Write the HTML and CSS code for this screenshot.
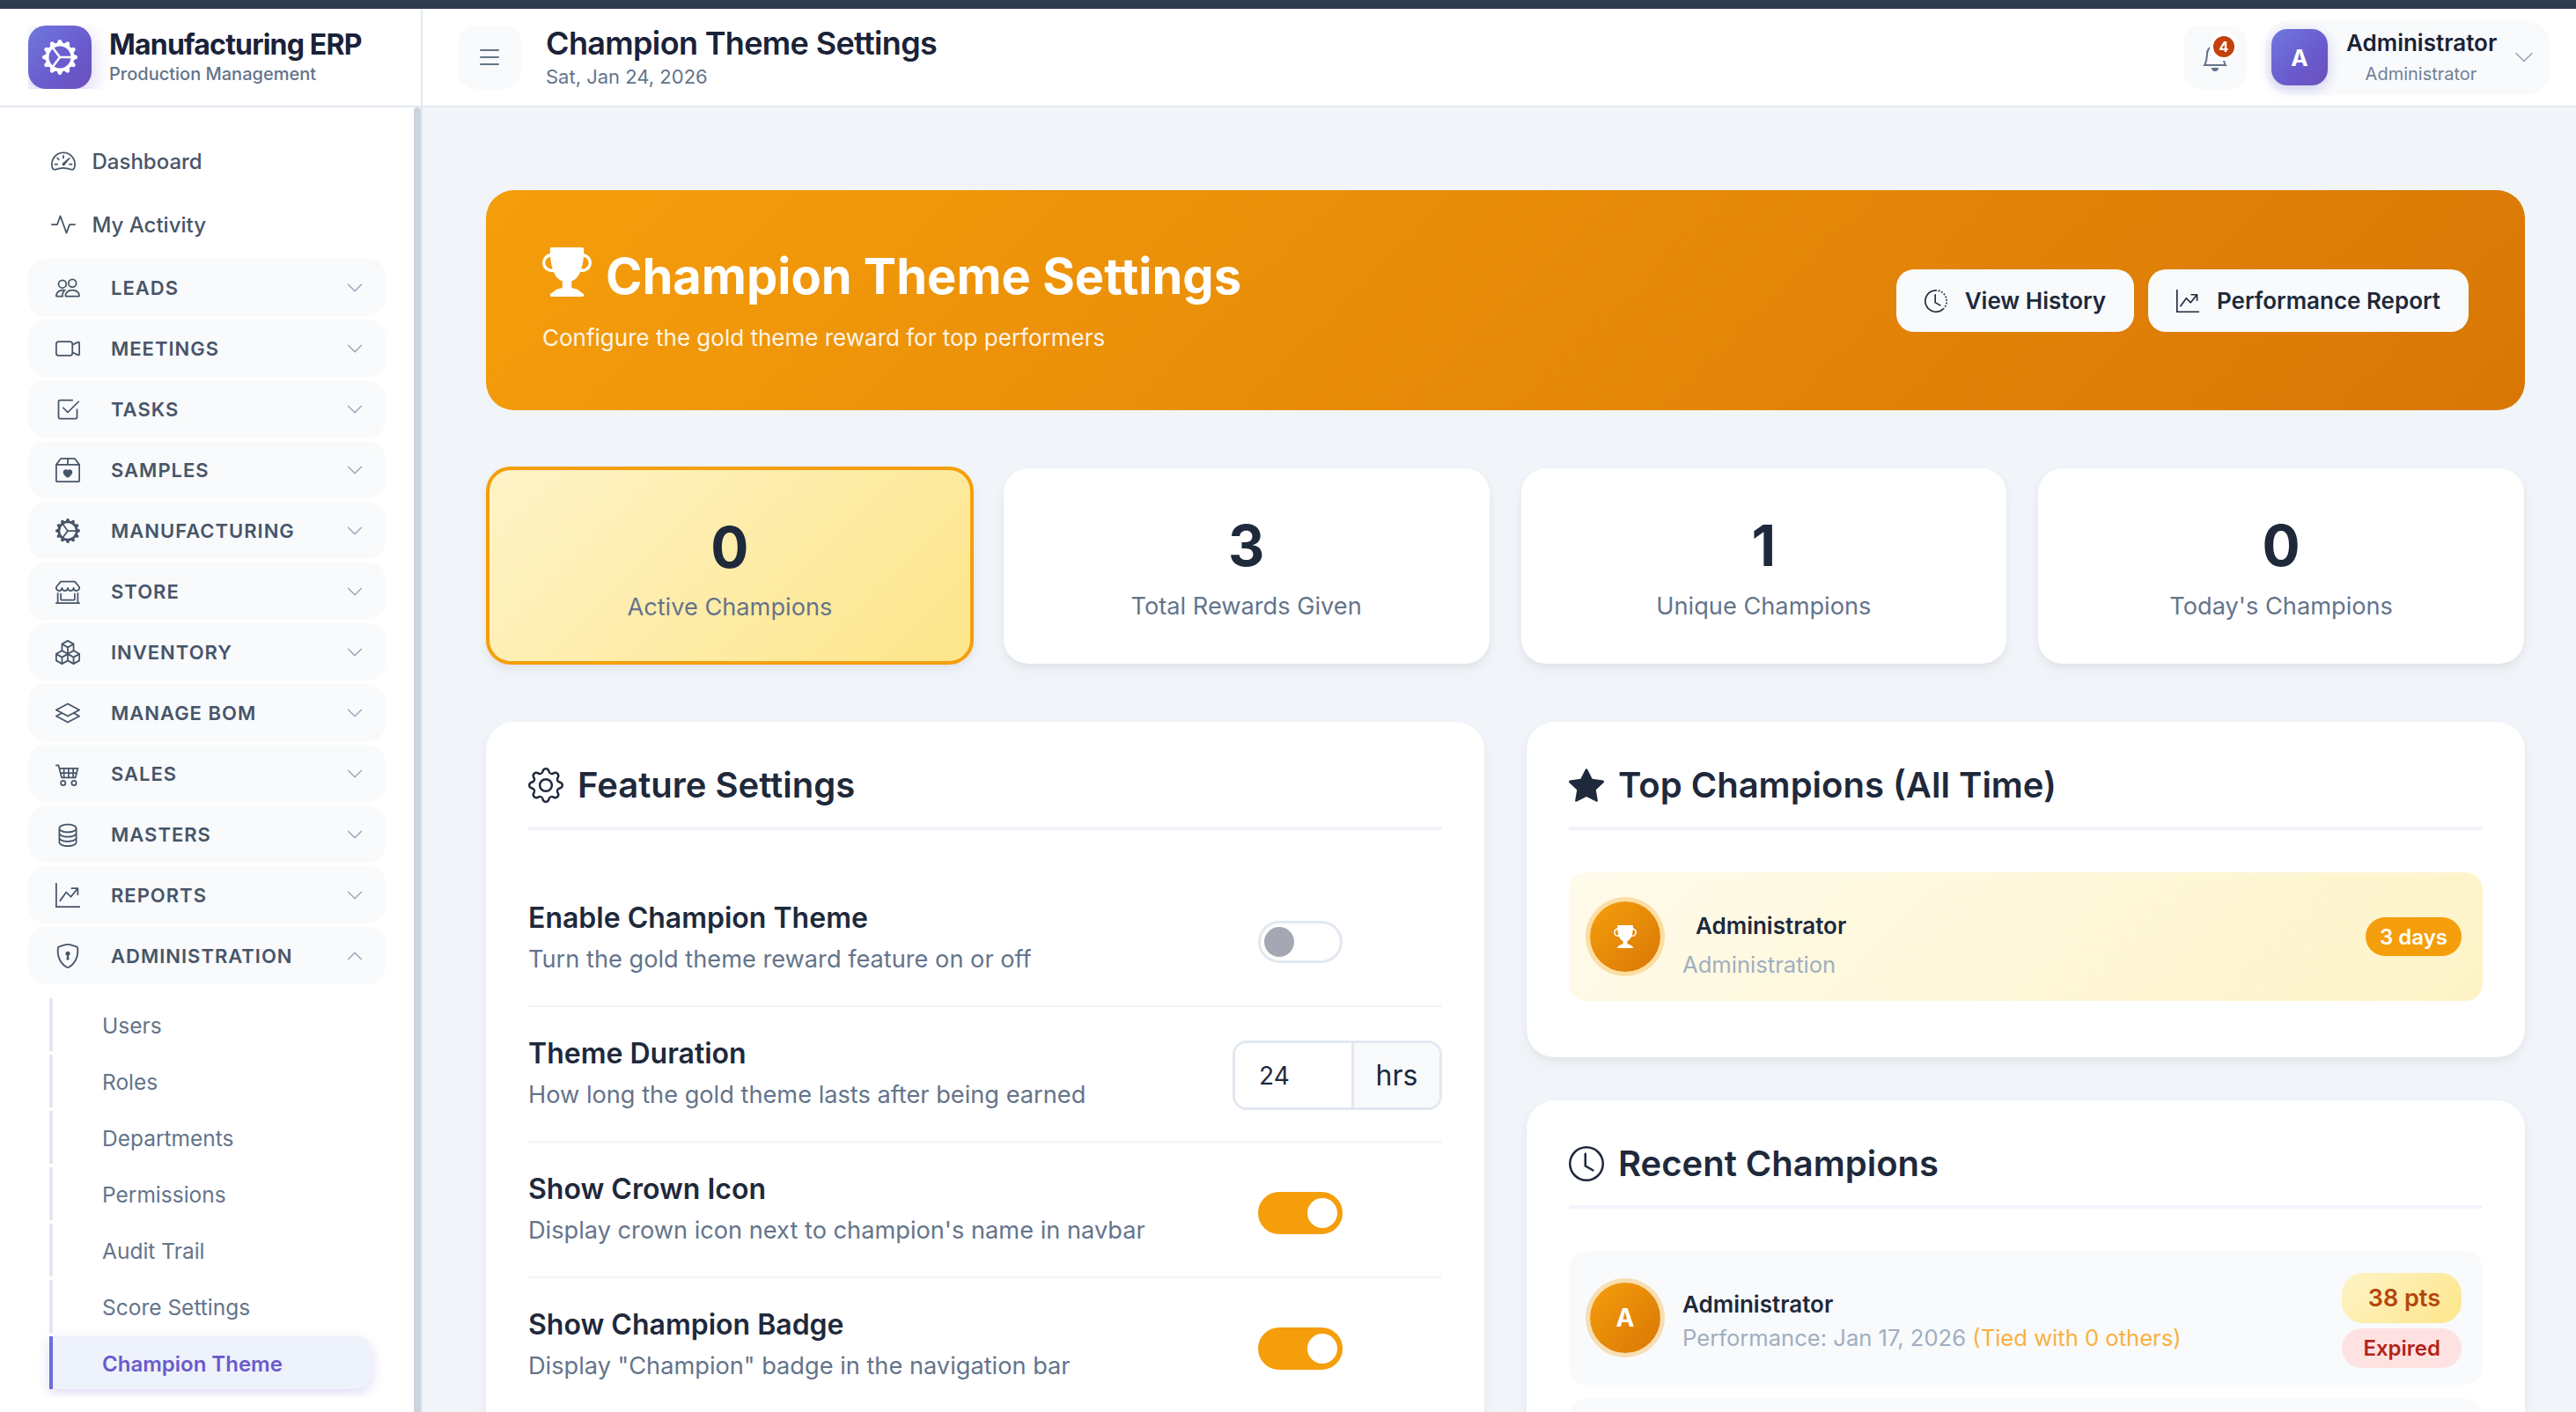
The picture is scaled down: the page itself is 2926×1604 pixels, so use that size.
FILE: index.html
```html
<!DOCTYPE html>
<html lang="en">
<head>
<meta charset="utf-8">
<title>Champion Theme Settings</title>
<link rel="stylesheet" href="styles.css">
</head>
<body>
<svg class="sprite" xmlns="http://www.w3.org/2000/svg">
<symbol id="i-speed" viewBox="0 0 16 16"><path d="M8 4a.5.5 0 0 1 .5.5V6a.5.5 0 0 1-1 0V4.5A.5.5 0 0 1 8 4zM3.732 5.732a.5.5 0 0 1 .707 0l.915.914a.5.5 0 1 1-.708.708l-.914-.915a.5.5 0 0 1 0-.707zM2 10a.5.5 0 0 1 .5-.5h1.586a.5.5 0 0 1 0 1H2.5A.5.5 0 0 1 2 10zm9.5 0a.5.5 0 0 1 .5-.5h1.5a.5.5 0 0 1 0 1H12a.5.5 0 0 1-.5-.5zm.754-4.246a.389.389 0 0 0-.527-.02L7.547 9.31a.91.91 0 1 0 1.302 1.258l3.434-4.297a.389.389 0 0 0-.029-.518z"/><path fill-rule="evenodd" d="M0 10a8 8 0 1 1 15.547 2.661c-.442 1.253-1.845 1.602-2.932 1.25C11.309 13.488 9.475 13 8 13c-1.474 0-3.31.488-4.615.911-1.087.352-2.49.003-2.932-1.25A7.988 7.988 0 0 1 0 10zm8-7a7 7 0 0 0-6.603 9.329c.203.575.923.876 1.68.63C4.397 12.533 6.358 12 8 12s3.604.532 4.923.96c.757.245 1.477-.056 1.68-.631A7 7 0 0 0 8 3z"/></symbol>
<symbol id="i-activity" viewBox="0 0 16 16"><path fill-rule="evenodd" d="M6 2a.5.5 0 0 1 .47.33L10 12.036l1.53-4.208A.5.5 0 0 1 12 7.5h3.5a.5.5 0 0 1 0 1h-3.15l-1.88 5.17a.5.5 0 0 1-.94 0L6 3.964 4.47 8.171A.5.5 0 0 1 4 8.5H.5a.5.5 0 0 1 0-1h3.15l1.88-5.17A.5.5 0 0 1 6 2Z"/></symbol>
<symbol id="i-people" viewBox="0 0 16 16"><path d="M15 14s1 0 1-1-1-4-5-4-5 3-5 4 1 1 1 1h8Zm-7.978-1A.261.261 0 0 1 7 12.996c.001-.264.167-1.03.76-1.72C8.312 10.629 9.282 10 11 10c1.717 0 2.687.63 3.24 1.276.593.69.758 1.457.76 1.72l-.008.002a.274.274 0 0 1-.014.002H7.022ZM11 7a2 2 0 1 0 0-4 2 2 0 0 0 0 4Zm3-2a3 3 0 1 1-6 0 3 3 0 0 1 6 0ZM6.936 9.28a5.88 5.88 0 0 0-1.23-.247A7.35 7.35 0 0 0 5 9c-4 0-5 3-5 4 0 .667.333 1 1 1h4.216A2.238 2.238 0 0 1 5 13c0-1.01.377-2.042 1.09-2.904.243-.294.526-.569.846-.816ZM4.92 10A5.493 5.493 0 0 0 4 13H1c0-.26.164-1.03.76-1.724.545-.636 1.492-1.256 3.16-1.275ZM1.5 5.5a3 3 0 1 1 6 0 3 3 0 0 1-6 0Zm3-2a2 2 0 1 0 0 4 2 2 0 0 0 0-4Z"/></symbol>
<symbol id="i-video" viewBox="0 0 16 16"><path fill-rule="evenodd" d="M0 5a2 2 0 0 1 2-2h7.5a2 2 0 0 1 1.983 1.738l3.11-1.382A1 1 0 0 1 16 4.269v7.462a1 1 0 0 1-1.406.913l-3.111-1.382A2 2 0 0 1 9.5 13H2a2 2 0 0 1-2-2V5zm11.5 5.175 3.5 1.556V4.269l-3.5 1.556v4.35zM2 4a1 1 0 0 0-1 1v6a1 1 0 0 0 1 1h7.5a1 1 0 0 0 1-1V5a1 1 0 0 0-1-1H2z"/></symbol>
<symbol id="i-check" viewBox="0 0 16 16"><path d="M3 14.5A1.5 1.5 0 0 1 1.5 13V3A1.5 1.5 0 0 1 3 1.5h8a.5.5 0 0 1 0 1H3a.5.5 0 0 0-.5.5v10a.5.5 0 0 0 .5.5h10a.5.5 0 0 0 .5-.5V8a.5.5 0 0 1 1 0v5a1.5 1.5 0 0 1-1.5 1.5H3z"/><path d="m8.354 10.354 7-7a.5.5 0 0 0-.708-.708L8 9.293 5.354 6.646a.5.5 0 1 0-.708.708l3 3a.5.5 0 0 0 .708 0z"/></symbol>
<symbol id="i-box" viewBox="0 0 16 16"><path d="M8 7.982C9.664 6.309 13.825 9.236 8 13 2.175 9.236 6.336 6.31 8 7.982Z"/><path d="M3.75 0a1 1 0 0 0-.8.4L.1 4.2a.5.5 0 0 0-.1.3V15a1 1 0 0 0 1 1h14a1 1 0 0 0 1-1V4.5a.5.5 0 0 0-.1-.3L13.05.4a1 1 0 0 0-.8-.4h-8.5Zm0 1H7.5v3h-6l2.25-3ZM8.5 4V1h3.75l2.25 3h-6ZM15 5v10H1V5h14Z"/></symbol>
<symbol id="i-gearwide" viewBox="0 0 16 16"><path d="M7.068.727c.243-.97 1.62-.97 1.864 0l.071.286a.96.96 0 0 0 1.622.434l.205-.211c.695-.719 1.888-.03 1.613.931l-.08.284a.96.96 0 0 0 1.187 1.187l.283-.081c.96-.275 1.65.918.931 1.613l-.211.205a.96.96 0 0 0 .434 1.622l.286.071c.97.243.97 1.62 0 1.864l-.286.071a.96.96 0 0 0-.434 1.622l.211.205c.719.695.03 1.888-.931 1.613l-.284-.08a.96.96 0 0 0-1.187 1.187l.081.283c.275.96-.918 1.65-1.613.931l-.205-.211a.96.96 0 0 0-1.622.434l-.071.286c-.243.97-1.62.97-1.864 0l-.071-.286a.96.96 0 0 0-1.622-.434l-.205.211c-.695.719-1.888.03-1.613-.931l.08-.284a.96.96 0 0 0-1.186-1.187l-.284.081c-.96.275-1.65-.918-.931-1.613l.211-.205a.96.96 0 0 0-.434-1.622l-.286-.071c-.97-.243-.97-1.62 0-1.864l.286-.071a.96.96 0 0 0 .434-1.622l-.211-.205c-.719-.695-.03-1.888.931-1.613l.284.08a.96.96 0 0 0 1.187-1.186l-.081-.284c-.275-.96.918-1.65 1.613-.931l.205.211a.96.96 0 0 0 1.622-.434l.071-.286zM12.973 8.5H8.25l-2.834 3.779A4.998 4.998 0 0 0 12.973 8.5zm0-1a4.998 4.998 0 0 0-7.557-3.779l2.834 3.78h4.723zM5.048 3.967c-.03.021-.058.043-.087.065l.087-.065zm-.431.355A4.984 4.984 0 0 0 3.002 8c0 1.455.622 2.765 1.615 3.678L7.375 8 4.617 4.322zm.344 7.646.087.065-.087-.065z"/></symbol>
<symbol id="i-shop" viewBox="0 0 16 16"><path d="M2.97 1.35A1 1 0 0 1 3.73 1h8.54a1 1 0 0 1 .76.35l2.609 3.044A1.5 1.5 0 0 1 16 5.37v.255a2.375 2.375 0 0 1-4.25 1.458A2.371 2.371 0 0 1 9.875 8 2.37 2.37 0 0 1 8 7.083 2.37 2.37 0 0 1 6.125 8a2.37 2.37 0 0 1-1.875-.917A2.375 2.375 0 0 1 0 5.625V5.37a1.5 1.5 0 0 1 .361-.976l2.61-3.045zm1.78 4.275a1.375 1.375 0 0 0 2.75 0 .5.5 0 0 1 1 0 1.375 1.375 0 0 0 2.75 0 .5.5 0 0 1 1 0 1.375 1.375 0 1 0 2.75 0V5.37a.5.5 0 0 0-.12-.325L12.27 2H3.73L1.12 5.045A.5.5 0 0 0 1 5.37v.255a1.375 1.375 0 0 0 2.75 0 .5.5 0 0 1 1 0zM1.5 8.5A.5.5 0 0 1 2 9v6h12V9a.5.5 0 0 1 1 0v6h.5a.5.5 0 0 1 0 1H.5a.5.5 0 0 1 0-1H1V9a.5.5 0 0 1 .5-.5zm2 .5a.5.5 0 0 1 .5.5V13h8V9.5a.5.5 0 0 1 1 0V13a1 1 0 0 1-1 1H4a1 1 0 0 1-1-1V9.5a.5.5 0 0 1 .5-.5z"/></symbol>
<symbol id="i-boxes" viewBox="0 0 16 16"><path d="M7.752.066a.5.5 0 0 1 .496 0l3.75 2.143a.5.5 0 0 1 .252.434v3.995l3.498 2A.5.5 0 0 1 16 9.07v4.286a.5.5 0 0 1-.252.434l-3.75 2.143a.5.5 0 0 1-.496 0l-3.502-2-3.502 2.001a.5.5 0 0 1-.496 0l-3.75-2.143A.5.5 0 0 1 0 13.357V9.071a.5.5 0 0 1 .252-.434L3.75 6.638V2.643a.5.5 0 0 1 .252-.434L7.752.066ZM4.25 7.504 1.508 9.071l2.742 1.567 2.742-1.567L4.25 7.504ZM7.5 9.933l-2.75 1.571v3.134l2.75-1.571V9.933Zm1 3.134 2.75 1.571v-3.134L8.5 9.933v3.134Zm.508-3.996 2.742 1.567 2.742-1.567-2.742-1.567-2.742 1.567Zm2.242-2.433V3.504L8.5 5.076V8.21l2.75-1.572ZM7.5 8.21V5.076L4.75 3.504v3.134L7.5 8.21ZM5.258 2.643 8 4.21l2.742-1.567L8 1.076 5.258 2.643ZM15 9.933l-2.75 1.571v3.134L15 13.067V9.933ZM3.75 14.638v-3.134L1 9.933v3.134l2.75 1.571Z"/></symbol>
<symbol id="i-layers" viewBox="0 0 16 16"><path d="M8.235 1.559a.5.5 0 0 0-.47 0l-7.5 4a.5.5 0 0 0 0 .882L3.188 8 .264 9.559a.5.5 0 0 0 0 .882l7.5 4a.5.5 0 0 0 .47 0l7.5-4a.5.5 0 0 0 0-.882L12.813 8l2.922-1.559a.5.5 0 0 0 0-.882l-7.5-4zm3.515 7.008L14.438 10 8 13.433 1.562 10 4.25 8.567l3.515 1.874a.5.5 0 0 0 .47 0l3.515-1.874zM8 9.433 1.562 6 8 2.567 14.438 6 8 9.433z"/></symbol>
<symbol id="i-cart" viewBox="0 0 16 16"><path d="M0 2.5A.5.5 0 0 1 .5 2H2a.5.5 0 0 1 .485.379L2.89 4H14.5a.5.5 0 0 1 .485.621l-1.5 6A.5.5 0 0 1 13 11H4a.5.5 0 0 1-.485-.379L1.61 3H.5a.5.5 0 0 1-.5-.5zM3.14 5l.5 2H5V5H3.14zM6 5v2h2V5H6zm3 0v2h2V5H9zm3 0v2h1.36l.5-2H12zm1.11 3H12v2h.61l.5-2zM11 8H9v2h2V8zM8 8H6v2h2V8zM5 8H3.89l.5 2H5V8zm0 5a1 1 0 1 0 0 2 1 1 0 0 0 0-2zm-2 1a2 2 0 1 1 4 0 2 2 0 0 1-4 0zm9-1a1 1 0 1 0 0 2 1 1 0 0 0 0-2zm-2 1a2 2 0 1 1 4 0 2 2 0 0 1-4 0z"/></symbol>
<symbol id="i-db" viewBox="0 0 16 16"><path d="M4.318 2.687C5.234 2.271 6.536 2 8 2s2.766.27 3.682.687C12.644 3.125 13 3.627 13 4c0 .374-.356.875-1.318 1.313C10.766 5.729 9.464 6 8 6s-2.766-.27-3.682-.687C3.356 4.875 3 4.373 3 4c0-.374.356-.875 1.318-1.313ZM13 5.698V7c0 .374-.356.875-1.318 1.313C10.766 8.729 9.464 9 8 9s-2.766-.27-3.682-.687C3.356 7.875 3 7.373 3 7V5.698c.271.202.58.378.904.525C4.978 6.711 6.427 7 8 7s3.022-.289 4.096-.777A4.92 4.92 0 0 0 13 5.698ZM14 4c0-1.007-.875-1.755-1.904-2.223C11.022 1.289 9.573 1 8 1s-3.022.289-4.096.777C2.875 2.245 2 2.993 2 4v9c0 1.007.875 1.755 1.904 2.223C4.978 15.71 6.427 16 8 16s3.022-.289 4.096-.777C13.125 14.755 14 14.007 14 13V4Zm-1 4.698V10c0 .374-.356.875-1.318 1.313C10.766 11.729 9.464 12 8 12s-2.766-.27-3.682-.687C3.356 10.875 3 10.373 3 10V8.698c.271.202.58.378.904.525C4.978 9.71 6.427 10 8 10s3.022-.289 4.096-.777A4.92 4.92 0 0 0 13 8.698Zm0 3V13c0 .374-.356.875-1.318 1.313C10.766 14.729 9.464 15 8 15s-2.766-.27-3.682-.687C3.356 13.875 3 13.373 3 13v-1.302c.271.202.58.378.904.525C4.978 12.71 6.427 13 8 13s3.022-.289 4.096-.777c.324-.147.633-.323.904-.525Z"/></symbol>
<symbol id="i-graph" viewBox="0 0 16 16"><path fill-rule="evenodd" d="M0 0h1v15h15v1H0V0Zm10 3.5a.5.5 0 0 1 .5-.5h4a.5.5 0 0 1 .5.5v4a.5.5 0 0 1-1 0V4.9l-3.613 4.417a.5.5 0 0 1-.74.037L7.06 6.767l-3.656 5.027a.5.5 0 0 1-.808-.588l4-5.5a.5.5 0 0 1 .758-.06l2.609 2.61L13.445 4H10.5a.5.5 0 0 1-.5-.5Z"/></symbol>
<symbol id="i-shield" viewBox="0 0 16 16"><path d="M5.338 1.59a61.44 61.44 0 0 0-2.837.856.481.481 0 0 0-.328.39c-.554 4.157.726 7.19 2.253 9.188a10.725 10.725 0 0 0 2.287 2.233c.346.244.652.42.893.533.12.057.218.095.293.118a.55.55 0 0 0 .101.025.615.615 0 0 0 .1-.025c.076-.023.174-.061.294-.118.24-.113.547-.29.893-.533a10.726 10.726 0 0 0 2.287-2.233c1.527-1.997 2.807-5.031 2.253-9.188a.48.48 0 0 0-.328-.39c-.651-.213-1.75-.56-2.837-.855C9.552 1.29 8.531 1.067 8 1.067c-.53 0-1.552.223-2.662.524zM5.072.56C6.157.265 7.31 0 8 0s1.843.265 2.928.56c1.11.3 2.229.655 2.887.87a1.54 1.54 0 0 1 1.044 1.262c.596 4.477-.787 7.795-2.465 9.99a11.775 11.775 0 0 1-2.517 2.453 7.159 7.159 0 0 1-1.048.625c-.28.132-.581.24-.829.24s-.548-.108-.829-.24a7.158 7.158 0 0 1-1.048-.625 11.777 11.777 0 0 1-2.517-2.453C1.928 10.487.545 7.169 1.141 2.692A1.54 1.54 0 0 1 2.185 1.43 62.456 62.456 0 0 1 5.072.56z"/><path d="M9.5 6.5a1.5 1.5 0 0 1-1 1.415l.385 1.99a.5.5 0 0 1-.491.595h-.788a.5.5 0 0 1-.49-.595l.384-1.99a1.5 1.5 0 1 1 2-1.415z"/></symbol>
<symbol id="i-down" viewBox="0 0 16 16"><path fill-rule="evenodd" d="M1.646 4.646a.5.5 0 0 1 .708 0L8 10.293l5.646-5.647a.5.5 0 0 1 .708.708l-6 6a.5.5 0 0 1-.708 0l-6-6a.5.5 0 0 1 0-.708z"/></symbol>
<symbol id="i-up" viewBox="0 0 16 16"><path fill-rule="evenodd" d="M7.646 4.646a.5.5 0 0 1 .708 0l6 6a.5.5 0 0 1-.708.708L8 5.707l-5.646 5.647a.5.5 0 0 1-.708-.708l6-6z"/></symbol>
<symbol id="i-trophy" viewBox="0 0 16 16"><path d="M2.5.5A.5.5 0 0 1 3 0h10a.5.5 0 0 1 .5.5c0 .538-.012 1.05-.034 1.536a3 3 0 1 1-1.133 5.89c-.79 1.865-1.878 2.777-2.833 3.011v2.173l1.425.356c.194.048.377.135.537.255L13.3 15.1a.5.5 0 0 1-.3.9H3a.5.5 0 0 1-.3-.9l1.838-1.379c.16-.12.343-.207.537-.255L6.5 13.11v-2.173c-.955-.234-2.043-1.146-2.833-3.012a3 3 0 1 1-1.132-5.89A33.076 33.076 0 0 1 2.5.5zm.099 2.54a2 2 0 0 0 .72 3.935c-.333-1.05-.588-2.346-.72-3.935zm10.083 3.935a2 2 0 0 0 .72-3.935c-.133 1.59-.388 2.885-.72 3.935z"/></symbol>
<symbol id="i-history" viewBox="0 0 16 16"><path d="M8.515 1.019A7 7 0 0 0 8 1V0a8 8 0 0 1 .589.022l-.074.997zm2.004.45a7.003 7.003 0 0 0-.985-.299l.219-.976c.383.086.76.2 1.126.342l-.36.933zm1.37.71a7.01 7.01 0 0 0-.439-.27l.493-.87a8.025 8.025 0 0 1 .979.654l-.615.789a6.996 6.996 0 0 0-.418-.302zm1.834 1.79a6.99 6.99 0 0 0-.653-.796l.724-.69c.27.285.52.59.747.91l-.818.576zm.744 1.352a7.08 7.08 0 0 0-.214-.468l.893-.45a7.976 7.976 0 0 1 .45 1.088l-.95.313a7.023 7.023 0 0 0-.179-.483zm.53 2.507a6.991 6.991 0 0 0-.1-1.025l.985-.17c.067.386.106.778.116 1.17l-1 .025zm-.131 1.538c.033-.17.06-.339.081-.51l.993.123a7.957 7.957 0 0 1-.23 1.155l-.964-.267c.046-.165.086-.332.12-.501zm-.952 2.379c.184-.29.346-.594.486-.908l.914.405c-.16.36-.345.706-.555 1.038l-.845-.535zm-.964 1.205c.122-.122.239-.248.35-.378l.758.653a8.073 8.073 0 0 1-.401.432l-.707-.707z"/><path d="M8 1a7 7 0 1 0 4.95 11.95l.707.707A8.001 8.001 0 1 1 8 0v1z"/><path d="M7.5 3a.5.5 0 0 1 .5.5v5.21l3.248 1.856a.5.5 0 0 1-.496.868l-3.5-2A.5.5 0 0 1 7 9V3.5a.5.5 0 0 1 .5-.5z"/></symbol>
<symbol id="i-gear" viewBox="0 0 16 16"><path d="M8 4.754a3.246 3.246 0 1 0 0 6.492 3.246 3.246 0 0 0 0-6.492zM5.754 8a2.246 2.246 0 1 1 4.492 0 2.246 2.246 0 0 1-4.492 0z"/><path d="M9.796 1.343c-.527-1.79-3.065-1.79-3.592 0l-.094.319a.873.873 0 0 1-1.255.52l-.292-.16c-1.64-.892-3.433.902-2.54 2.541l.159.292a.873.873 0 0 1-.52 1.255l-.319.094c-1.79.527-1.79 3.065 0 3.592l.319.094a.873.873 0 0 1 .52 1.255l-.16.292c-.892 1.64.901 3.434 2.541 2.54l.292-.159a.873.873 0 0 1 1.255.52l.094.319c.527 1.79 3.065 1.79 3.592 0l.094-.319a.873.873 0 0 1 1.255-.52l.292.16c1.64.893 3.434-.902 2.54-2.541l-.159-.292a.873.873 0 0 1 .52-1.255l.319-.094c1.79-.527 1.79-3.065 0-3.592l-.319-.094a.873.873 0 0 1-.52-1.255l.16-.292c.893-1.64-.902-3.433-2.541-2.54l-.292.159a.873.873 0 0 1-1.255-.52l-.094-.319zm-2.633.283c.246-.835 1.428-.835 1.674 0l.094.319a1.873 1.873 0 0 0 2.693 1.115l.291-.16c.764-.415 1.6.42 1.184 1.185l-.159.292a1.873 1.873 0 0 0 1.116 2.692l.318.094c.835.246.835 1.428 0 1.674l-.319.094a1.873 1.873 0 0 0-1.115 2.693l.16.291c.415.764-.42 1.6-1.185 1.184l-.291-.159a1.873 1.873 0 0 0-2.693 1.116l-.094.318c-.246.835-1.428.835-1.674 0l-.094-.319a1.873 1.873 0 0 0-2.692-1.115l-.292.16c-.764.415-1.6-.42-1.184-1.185l.159-.291A1.873 1.873 0 0 0 1.945 8.93l-.319-.094c-.835-.246-.835-1.428 0-1.674l.319-.094A1.873 1.873 0 0 0 3.06 4.377l-.16-.292c-.415-.764.42-1.6 1.185-1.184l.292.159a1.873 1.873 0 0 0 2.692-1.115l.094-.319z"/></symbol>
<symbol id="i-star" viewBox="0 0 16 16"><path d="M3.612 15.443c-.386.198-.824-.149-.746-.592l.83-4.73L.173 6.765c-.329-.314-.158-.888.283-.95l4.898-.696L7.538.792c.197-.39.73-.39.927 0l2.184 4.327 4.898.696c.441.062.612.636.282.95l-3.522 3.356.83 4.73c.078.443-.36.79-.746.592L8 13.187l-4.389 2.256z"/></symbol>
<symbol id="i-clock" viewBox="0 0 16 16"><path d="M8 3.5a.5.5 0 0 0-1 0V9a.5.5 0 0 0 .252.434l3.5 2a.5.5 0 0 0 .496-.868L8 8.71V3.5z"/><path d="M8 16A8 8 0 1 0 8 0a8 8 0 0 0 0 16zm7-8A7 7 0 1 1 1 8a7 7 0 0 1 14 0z"/></symbol>
<symbol id="i-list" viewBox="0 0 16 16"><path fill-rule="evenodd" d="M2.5 12a.5.5 0 0 1 .5-.5h10a.5.5 0 0 1 0 1H3a.5.5 0 0 1-.5-.5zm0-4a.5.5 0 0 1 .5-.5h10a.5.5 0 0 1 0 1H3a.5.5 0 0 1-.5-.5zm0-4a.5.5 0 0 1 .5-.5h10a.5.5 0 0 1 0 1H3a.5.5 0 0 1-.5-.5z"/></symbol>
<symbol id="i-bell" viewBox="0 0 16 16"><path d="M8 16a2 2 0 0 0 2-2H6a2 2 0 0 0 2 2zM8 1.918l-.797.161A4.002 4.002 0 0 0 4 6c0 .628-.134 2.197-.459 3.742-.16.767-.376 1.566-.663 2.258h10.244c-.287-.692-.502-1.49-.663-2.258C12.134 8.197 12 6.628 12 6a4.002 4.002 0 0 0-3.203-3.92L8 1.917zM14.22 12c.223.447.481.801.78 1H1c.299-.199.557-.553.78-1C2.68 10.2 3 6.88 3 6c0-2.42 1.72-4.44 4.005-4.901a1 1 0 1 1 1.99 0A5.002 5.002 0 0 1 13 6c0 .88.32 4.2 1.22 6z"/></symbol>
</svg>

<div class="topbar"></div>
<div class="app">
  <aside class="sidebar">
    <div class="brand">
      <div class="logo-clip"><div class="logo"><svg class="logo-icon"><use href="#i-gearwide"/></svg></div></div>
      <div class="brand-text">
        <div class="brand-name">Manufacturing ERP</div>
        <div class="brand-sub">Production Management</div>
      </div>
    </div>
    <div class="side-body">
      <nav class="nav">
        <a class="nav-link"><svg class="nav-icon"><use href="#i-speed"/></svg><span>Dashboard</span></a>
        <a class="nav-link"><svg class="nav-icon"><use href="#i-activity"/></svg><span>My Activity</span></a>
        <div class="groups">
          <div class="group"><svg class="group-icon"><use href="#i-people"/></svg><span class="group-label">LEADS</span><svg class="chev"><use href="#i-down"/></svg></div>
          <div class="group"><svg class="group-icon"><use href="#i-video"/></svg><span class="group-label">MEETINGS</span><svg class="chev"><use href="#i-down"/></svg></div>
          <div class="group"><svg class="group-icon"><use href="#i-check"/></svg><span class="group-label">TASKS</span><svg class="chev"><use href="#i-down"/></svg></div>
          <div class="group"><svg class="group-icon"><use href="#i-box"/></svg><span class="group-label">SAMPLES</span><svg class="chev"><use href="#i-down"/></svg></div>
          <div class="group"><svg class="group-icon"><use href="#i-gearwide"/></svg><span class="group-label">MANUFACTURING</span><svg class="chev"><use href="#i-down"/></svg></div>
          <div class="group"><svg class="group-icon"><use href="#i-shop"/></svg><span class="group-label">STORE</span><svg class="chev"><use href="#i-down"/></svg></div>
          <div class="group"><svg class="group-icon"><use href="#i-boxes"/></svg><span class="group-label">INVENTORY</span><svg class="chev"><use href="#i-down"/></svg></div>
          <div class="group"><svg class="group-icon"><use href="#i-layers"/></svg><span class="group-label">MANAGE BOM</span><svg class="chev"><use href="#i-down"/></svg></div>
          <div class="group"><svg class="group-icon"><use href="#i-cart"/></svg><span class="group-label">SALES</span><svg class="chev"><use href="#i-down"/></svg></div>
          <div class="group"><svg class="group-icon"><use href="#i-db"/></svg><span class="group-label">MASTERS</span><svg class="chev"><use href="#i-down"/></svg></div>
          <div class="group"><svg class="group-icon"><use href="#i-graph"/></svg><span class="group-label">REPORTS</span><svg class="chev"><use href="#i-down"/></svg></div>
          <div class="group"><svg class="group-icon"><use href="#i-shield"/></svg><span class="group-label">ADMINISTRATION</span><svg class="chev"><use href="#i-up"/></svg></div>
        </div>
        <div class="subs">
          <a class="sub">Users</a>
          <a class="sub">Roles</a>
          <a class="sub">Departments</a>
          <a class="sub">Permissions</a>
          <a class="sub">Audit Trail</a>
          <a class="sub">Score Settings</a>
          <a class="sub sub-active">Champion Theme</a>
        </div>
      </nav>
      <div class="scroll-thumb"></div>
    </div>
  </aside>
  <main class="main">
    <header class="header">
      <button class="icon-btn"><svg class="list-icon"><use href="#i-list"/></svg></button>
      <div class="page-head">
        <div class="page-title">Champion Theme Settings</div>
        <div class="page-date">Sat, Jan 24, 2026</div>
      </div>
      <div class="header-right">
        <button class="icon-btn bell-btn"><svg class="bell-icon"><use href="#i-bell"/></svg><span class="bell-badge">4</span></button>
        <div class="user">
          <div class="user-avatar">A</div>
          <div class="user-text">
            <div class="user-name">Administrator</div>
            <div class="user-role">Administrator</div>
          </div>
          <svg class="user-chev"><use href="#i-down"/></svg>
        </div>
      </div>
    </header>
    <div class="content">
      <section class="banner">
        <div>
          <h1 class="banner-title"><svg class="banner-trophy"><use href="#i-trophy"/></svg>Champion Theme Settings</h1>
          <p class="banner-sub">Configure the gold theme reward for top performers</p>
        </div>
        <div class="banner-actions">
          <button class="btn"><svg class="btn-icon"><use href="#i-history"/></svg>View History</button>
          <button class="btn"><svg class="btn-icon"><use href="#i-graph"/></svg>Performance Report</button>
        </div>
      </section>
      <section class="stats">
        <div class="stat stat-active"><div class="stat-num">0</div><div class="stat-label">Active Champions</div></div>
        <div class="stat"><div class="stat-num">3</div><div class="stat-label">Total Rewards Given</div></div>
        <div class="stat"><div class="stat-num">1</div><div class="stat-label">Unique Champions</div></div>
        <div class="stat"><div class="stat-num">0</div><div class="stat-label">Today's Champions</div></div>
      </section>
      <section class="columns">
        <div class="card">
          <h2 class="card-title"><svg class="card-icon"><use href="#i-gear"/></svg>Feature Settings</h2>
          <div class="setting">
            <div><div class="setting-title">Enable Champion Theme</div><div class="setting-desc">Turn the gold theme reward feature on or off</div></div>
            <div class="toggle-slot"><span class="toggle"></span></div>
          </div>
          <div class="setting">
            <div><div class="setting-title">Theme Duration</div><div class="setting-desc">How long the gold theme lasts after being earned</div></div>
            <div class="duration"><span class="duration-value">24</span><span class="duration-unit">hrs</span></div>
          </div>
          <div class="setting">
            <div><div class="setting-title">Show Crown Icon</div><div class="setting-desc">Display crown icon next to champion's name in navbar</div></div>
            <div class="toggle-slot"><span class="toggle toggle-on"></span></div>
          </div>
          <div class="setting">
            <div><div class="setting-title">Show Champion Badge</div><div class="setting-desc">Display "Champion" badge in the navigation bar</div></div>
            <div class="toggle-slot"><span class="toggle toggle-on"></span></div>
          </div>
        </div>
        <div class="right-col">
          <div class="card">
            <h2 class="card-title"><svg class="card-icon"><use href="#i-star"/></svg>Top Champions (All Time)</h2>
            <div class="champ champ-top">
              <div class="avatar"><svg class="avatar-trophy"><use href="#i-trophy"/></svg></div>
              <div class="champ-main">
                <div class="champ-name champ-name-indent">Administrator</div>
                <div class="champ-dept">Administration</div>
              </div>
              <span class="days">3 days</span>
            </div>
          </div>
          <div class="card">
            <h2 class="card-title"><svg class="card-icon"><use href="#i-clock"/></svg>Recent Champions</h2>
            <div class="champ champ-recent">
              <div class="avatar">A</div>
              <div class="champ-main">
                <div class="champ-name">Administrator</div>
                <div class="champ-meta">Performance: Jan 17, 2026 <span class="tied">(Tied with 0 others)</span></div>
              </div>
              <div class="pills"><span class="pill pill-pts">38 pts</span><span class="pill pill-exp">Expired</span></div>
            </div>
            <div class="champ champ-recent"></div>
          </div>
        </div>
      </section>
    </div>
  </main>
</div>
</body>
</html>
```

FILE: styles.css
```css
* { box-sizing: border-box; }
html, body { margin: 0; height: 100%; overflow: hidden; }
body { font-family: Inter, "Liberation Sans", sans-serif; color: #1e293b; background: #f1f5f9; }
svg { fill: currentColor; display: block; flex: none; }
.sprite { display: none; }
button { font-family: inherit; border: 0; cursor: pointer; }
h1, h2, p { margin: 0; }

.topbar { height: 10px; background: #2f3a4d; }
.app { display: flex; height: 1594px; }

/* Sidebar */
.sidebar { width: 480px; flex: none; background: #fff; border-right: 2px solid #e2e8f0; display: flex; flex-direction: column; }
.brand { height: 112px; flex: none; border-bottom: 2px solid #e2e8f0; padding-left: 32px; display: flex; align-items: center; }
.logo-clip { width: 98px; height: 72px; overflow: hidden; margin-right: -6px; flex: none; }
.logo { width: 72px; height: 72px; border-radius: 20px; background: linear-gradient(135deg, #6f78de, #6a5acd 60%, #6a4fbb); box-shadow: 0 8px 24px rgba(102, 90, 205, .3); display: flex; align-items: center; justify-content: center; color: #fff; }
.logo-icon { width: 40px; height: 40px; }
.brand-text { position: relative; margin-top: -2px; }
.brand-name { font-size: 32px; font-weight: 700; line-height: 42px; letter-spacing: -.8px; color: #1a2238; }
.brand-sub { font-size: 20px; line-height: 30px; margin-top: -3px; font-weight: 500; color: #64748b; }

.side-body { flex: 1; display: flex; min-height: 0; }
.nav { flex: 1; height: 1465px; overflow: hidden; padding: 25px 32px 0 32px; }
.scroll-thumb { width: 8px; background: #cbd5e0; border-radius: 4px 4px 0 0; flex: none; }
.nav-link { height: 72px; display: flex; align-items: center; padding-left: 26px; gap: 18.5px; font-size: 24px; font-weight: 500; color: #475569; }
.nav-icon { width: 28px; height: 28px; }
.groups { margin-top: 3px; display: flex; flex-direction: column; gap: 4px; }
.group { height: 65px; border-radius: 20px; background: #f8fafc; display: flex; align-items: center; padding: 0 25px 0 31px; color: #475569; }
.group-icon { width: 28px; height: 28px; }
.group-label { flex: 1; margin-left: 35px; font-size: 22px; font-weight: 600; letter-spacing: 1px; }
.chev { width: 20px; height: 20px; color: #94a3b8; }
.subs { margin-top: 16px; padding-left: 24px; display: flex; flex-direction: column; gap: 4px; }
.sub { height: 60px; border-left: 4px solid #e2e8f0; padding: 2px 0 0 56px; display: flex; align-items: center; font-size: 24.5px; color: #64748b; }
.sub-active { border-left-color: #6a6ddb; background: #eef2fb; color: #6a5acd; font-size: 24px; font-weight: 600; border-radius: 0 20px 20px 0; width: 367px; box-shadow: 0 4px 14px rgba(102, 90, 205, .22); }

/* Main */
.main { flex: 1; min-width: 0; display: flex; flex-direction: column; }
.header { height: 112px; flex: none; background: #fff; border-bottom: 2px solid #e2e8f0; display: flex; align-items: center; padding: 0 29px 0 40px; }
.icon-btn { width: 72px; height: 72px; border-radius: 20px; background: #f8fafc; display: flex; align-items: center; justify-content: center; color: #64748b; flex: none; }
.list-icon { width: 32px; height: 32px; }
.page-head { margin-left: 28px; flex: 1; }
.page-title { font-size: 36px; line-height: 44px; font-weight: 600; letter-spacing: -.65px; color: #1a2238; }
.page-date { font-size: 22px; line-height: 32px; color: #64748b; }
.header-right { display: flex; align-items: center; gap: 21px; }
.bell-btn { position: relative; }
.bell-icon { width: 32px; height: 32px; }
.bell-badge { position: absolute; left: 30px; top: 8px; width: 32px; height: 32px; border-radius: 50%; border: 4px solid #fff; background: #c2410c; color: #fff; font-size: 16px; font-weight: 700; display: flex; align-items: center; justify-content: center; }
.user { width: 324px; height: 85px; border-radius: 28px; background: #f8fafc; display: flex; align-items: center; padding-left: 7px; }
.user-avatar { width: 64px; height: 64px; border-radius: 18px; background: linear-gradient(135deg, #6f78de, #6a5acd 60%, #6a4fbb); box-shadow: 0 4px 14px rgba(102, 90, 205, .3); color: #fff; font-weight: 700; font-size: 26px; display: flex; align-items: center; justify-content: center; flex: none; }
.user-text { margin-left: 21px; width: 170px; text-align: center; }
.user-name { font-size: 26px; font-weight: 600; line-height: 34px; color: #1a2238; }
.user-role { font-size: 20px; line-height: 30px; margin-top: 3px; color: #718096; }
.user-chev { width: 24px; height: 24px; margin-left: 20px; color: #94a3b8; }

.content { flex: 1; min-height: 0; overflow: hidden; padding: 94px 58px 0 72px; }
.banner { height: 250px; border-radius: 32px; background: linear-gradient(135deg, #f59e0b, #d97706); display: flex; align-items: center; justify-content: space-between; padding: 0 64px; color: #fff; }
.banner-title { font-size: 56px; line-height: 72px; font-weight: 700; display: flex; align-items: center; gap: 16px; }
.banner-trophy { width: 56px; height: 56px; margin-top: -10px; }
.banner-sub { font-size: 26px; line-height: 40px; margin-top: 14px; opacity: .9; }
.banner-actions { display: flex; gap: 16px; margin-top: 1px; }
.btn { height: 71px; padding: 0 32px; border-radius: 20px; background: #f8fafc; color: #1e293b; font-size: 26px; font-weight: 600; display: flex; align-items: center; gap: 20px; }
.btn-icon { width: 26px; height: 26px; }

.stats { margin: 66px 1px 0 0; display: grid; grid-template-columns: repeat(4, 1fr); gap: 36px; }
.stat { height: 222px; padding-top: 5px; border-radius: 28px; background: #fff; box-shadow: 0 4px 8px rgba(15, 23, 42, .05), 0 8px 18px rgba(15, 23, 42, .03); display: flex; flex-direction: column; align-items: center; justify-content: center; }
.stat-active { margin: -2px -2px -1px 0; height: 225px; padding-top: 9px; border: 4px solid #f59e0b; background: linear-gradient(135deg, #fef3c7, #fde68a); }
.stat-num { font-size: 64px; line-height: 76px; font-weight: 700; color: #1e293b; }
.stat-label { font-size: 27.2px; line-height: 40px; margin-top: 10.5px; color: #64748b; }

.columns { margin-top: 66px; display: grid; grid-template-columns: 1134px 1134px; gap: 48px; align-items: start; }
.right-col { display: flex; flex-direction: column; gap: 49px; }
.card { background: #fff; border-radius: 32px; padding: 48px; box-shadow: 0 4px 8px rgba(15, 23, 42, .04), 0 8px 18px rgba(15, 23, 42, .03); }
.card-title { font-size: 40px; line-height: 48px; font-weight: 600; display: flex; align-items: center; gap: 16px; padding-bottom: 23px; border-bottom: 4px solid #f1f5f9; margin-bottom: 47px; color: #1e293b; }
.right-col .card-title { margin-bottom: 48px; }
.card-icon { width: 40px; height: 40px; }

.setting { display: flex; align-items: center; justify-content: space-between; padding: 33px 0 30px; border-bottom: 2px solid #f1f5f9; }
.setting-title { font-size: 32px; line-height: 40px; font-weight: 600; color: #1e293b; }
.setting-desc { font-size: 27.2px; line-height: 44px; margin-top: 5px; color: #64748b; }
.toggle-slot { width: 209px; display: flex; justify-content: flex-start; padding: 5px 0 0; }
.toggle { width: 96px; height: 48px; border-radius: 24px; border: 3px solid #e2e8f0; background: #fff; position: relative; display: block; }
.toggle::after { content: ""; position: absolute; left: 4px; top: 4px; width: 34px; height: 34px; border-radius: 50%; background: #a5a8b2; }
.toggle-on { background: #f59e0b; border-color: #f59e0b; }
.toggle-on::after { left: auto; right: 3px; background: #fff; }
.duration { width: 238px; height: 79px; display: flex; border: 3px solid #e2e8f0; border-radius: 16px; overflow: hidden; }
.duration-value { flex: 1; background: #fff; font-size: 28px; padding-left: 27px; display: flex; align-items: center; color: #1e293b; }
.duration-unit { width: 100px; background: #f8fafc; border-left: 3px solid #e2e8f0; font-size: 32px; display: flex; align-items: center; justify-content: center; color: #1e293b; }

.champ { display: flex; align-items: center; border-radius: 20px; padding: 0 24px; margin-bottom: 16px; }
.champ-top { height: 146px; background: linear-gradient(135deg, #fffbeb, #fef3c7); }
.champ-recent { height: 152px; background: #f8fafc; }
.avatar { width: 80px; height: 80px; border-radius: 50%; background: linear-gradient(135deg, #f59e0b, #d97706); box-shadow: 0 0 0 5px rgba(245, 158, 11, .3); color: #fff; font-size: 28px; font-weight: 700; display: flex; align-items: center; justify-content: center; flex: none; }
.avatar-trophy { width: 26px; height: 26px; }
.champ-main { flex: 1; margin-left: 25px; padding-top: 8px; }
.champ-top .champ-main { padding-top: 20px; }
.champ-name { font-size: 26px; font-weight: 600; line-height: 38px; color: #1e293b; }
.champ-name-indent { margin-left: 15px; }
.champ-dept { font-size: 25.6px; line-height: 38px; margin-top: 6px; color: #a0aec0; }
.champ-meta { font-size: 25.6px; line-height: 38px; color: #a0aec0; }
.tied { color: #fbb040; }
.days { height: 44px; padding: 0 16px; border-radius: 22px; background: #f59e0b; color: #fff; font-size: 24px; font-weight: 600; display: flex; align-items: center; }
.pills { width: 136px; margin-top: 6px; display: flex; flex-direction: column; gap: 6px; }
.pill { border-radius: 24px; display: flex; align-items: center; justify-content: flex-end; padding-right: 24px; font-weight: 600; }
.pill-pts { height: 57px; font-size: 27px; background: linear-gradient(135deg, #fef3c7, #fde68a); color: #b4460f; }
.pill-exp { height: 45px; font-size: 24px; background: #fee2e2; color: #b42318; }
```
